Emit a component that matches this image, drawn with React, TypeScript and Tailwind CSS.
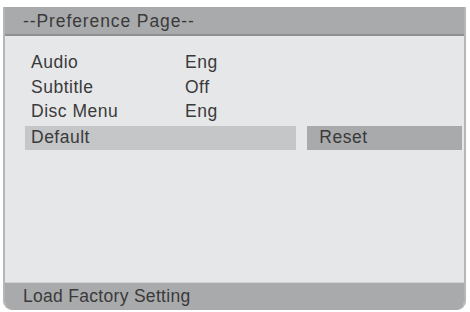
import React from 'react';

const rows = [
  { label: 'Audio', value: 'Eng' },
  { label: 'Subtitle', value: 'Off' },
  { label: 'Disc Menu', value: 'Eng' },
];

export default function App() {
  return (
    <div className="w-[470px] h-[312px] bg-white pt-[7px] pl-[3px] pr-[4px] pb-[2px]" style={{ fontFamily: '"Liberation Sans", Arial, sans-serif' }}>
      <div className="h-full flex flex-col bg-[#e6e7e9] border-l-2 border-r-2 border-[#b5b6b8] rounded-b-[9px] overflow-hidden text-[17.5px] tracking-[0.5px] text-[#3a3a3a]">
        <div className="h-[29px] shrink-0 bg-[#a9aaac] border-b-2 border-[#8e8f91] pl-[18px] pt-[2px] flex items-center tracking-[0.9px]">
          --Preference Page--
        </div>
        <div className="flex-1 pt-[14px] pl-[20px] pr-[2px]">
          {rows.map((r) => (
            <div key={r.label} className="h-[24.5px] flex items-center pl-[6px]">
              <span className="w-[154px]">{r.label}</span>
              <span>{r.value}</span>
            </div>
          ))}
          <div className="flex gap-[11px] h-[24px] mt-[2px]">
            <div className="w-[272px] bg-[#c5c6c8] flex items-center pl-[6px]">Default</div>
            <div className="w-[155px] bg-[#a9aaac] flex items-center pl-[12px]">Reset</div>
          </div>
        </div>
        <div className="h-[28px] shrink-0 bg-[#a9aaac] border-t border-[#cfd0d2] pl-[18px] flex items-center tracking-[0.3px]">
          Load Factory Setting
        </div>
      </div>
    </div>
  );
}
